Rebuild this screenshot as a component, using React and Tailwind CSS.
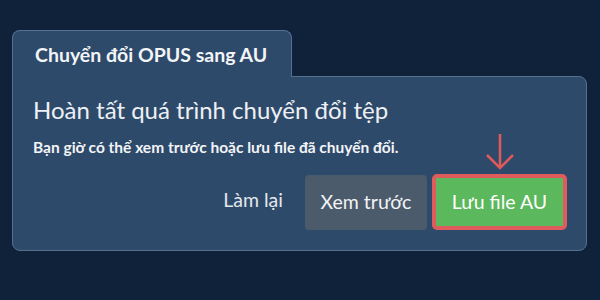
export default function App() {
  return (
    <div
      className="w-[600px] h-[300px] bg-[#10223a] pt-[30px] pl-[12px] pr-[13px]"
      style={{ fontFamily: "Lato, 'Noto Sans', sans-serif" }}
    >
      {/* Tab */}
      <div className="relative z-10 -mb-px w-[280px] h-[47px] bg-[#2d4a6b] border border-b-0 border-[#56708f] rounded-t-lg flex items-start pl-[22px] pt-[12px]">
        <span className="text-[19.5px] leading-[24px] font-bold text-[#f3f4f6]">Chuyển đổi OPUS sang AU</span>
      </div>

      {/* Panel */}
      <div className="bg-[#2d4a6b] border border-[#56708f] rounded-b-lg rounded-tr-lg h-[175px] pl-[20px] pr-[19px] pt-[18px]">
        <h1 className="text-[24px] leading-[30px] text-[#eef0f3]">Hoàn tất quá trình chuyển đổi tệp</h1>
        <p className="mt-[12px] text-[15.5px] leading-[20px] font-bold text-[#f3f4f6]">
          Bạn giờ có thể xem trước hoặc lưu file đã chuyển đổi.
        </p>

        <div className="mt-[17px] flex justify-end items-center">
          <button className="h-[56px] px-[11px] text-[19.5px] text-[#e5e7eb] mr-[11px] pb-[4px]">Làm lại</button>
          <button className="h-[55px] w-[122px] rounded-[4px] bg-[#4b5b6c] text-[19.5px] text-[#f3f4f6]">Xem trước</button>
          <div className="relative ml-[5px]">
            <svg
              className="absolute left-1/2 -translate-x-1/2 bottom-full mb-[3px]"
              width="30"
              height="38"
              viewBox="0 0 30 38"
              fill="none"
              stroke="#e05a5a"
              strokeWidth="2.5"
            >
              <path d="M15 1 V35" />
              <path d="M2 22 L15 35 L28 22" />
            </svg>
            <button className="h-[56px] w-[135px] rounded-[5px] border-[4px] border-[#e05c5c] bg-[#5cb85c] text-[19.5px] text-white">
              Lưu file AU
            </button>
          </div>
        </div>
      </div>
    </div>
  );
}
